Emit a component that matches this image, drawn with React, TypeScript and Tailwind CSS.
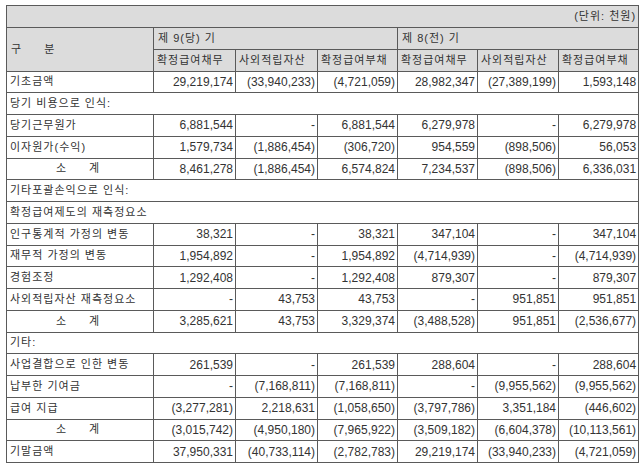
const font = { fontFamily: '"Liberation Sans", "Noto Sans CJK KR", sans-serif' };

type Row =
  | { kind: "section"; label: string }
  | { kind: "data"; label: string; values: string[] }
  | { kind: "sub"; values: string[] };

const rows: Row[] = [
  { kind: "data", label: "기초금액", values: ["29,219,174", "(33,940,233)", "(4,721,059)", "28,982,347", "(27,389,199)", "1,593,148"] },
  { kind: "section", label: "당기 비용으로 인식:" },
  { kind: "data", label: "당기근무원가", values: ["6,881,544", "-", "6,881,544", "6,279,978", "-", "6,279,978"] },
  { kind: "data", label: "이자원가(수익)", values: ["1,579,734", "(1,886,454)", "(306,720)", "954,559", "(898,506)", "56,053"] },
  { kind: "sub", values: ["8,461,278", "(1,886,454)", "6,574,824", "7,234,537", "(898,506)", "6,336,031"] },
  { kind: "section", label: "기타포괄손익으로 인식:" },
  { kind: "section", label: "확정급여제도의 재측정요소" },
  { kind: "data", label: "인구통계적 가정의 변동", values: ["38,321", "-", "38,321", "347,104", "-", "347,104"] },
  { kind: "data", label: "재무적 가정의 변동", values: ["1,954,892", "-", "1,954,892", "(4,714,939)", "-", "(4,714,939)"] },
  { kind: "data", label: "경험조정", values: ["1,292,408", "-", "1,292,408", "879,307", "-", "879,307"] },
  { kind: "data", label: "사외적립자산 재측정요소", values: ["-", "43,753", "43,753", "-", "951,851", "951,851"] },
  { kind: "sub", values: ["3,285,621", "43,753", "3,329,374", "(3,488,528)", "951,851", "(2,536,677)"] },
  { kind: "section", label: "기타:" },
  { kind: "data", label: "사업결합으로 인한 변동", values: ["261,539", "-", "261,539", "288,604", "-", "288,604"] },
  { kind: "data", label: "납부한 기여금", values: ["-", "(7,168,811)", "(7,168,811)", "-", "(9,955,562)", "(9,955,562)"] },
  { kind: "data", label: "급여 지급", values: ["(3,277,281)", "2,218,631", "(1,058,650)", "(3,797,786)", "3,351,184", "(446,602)"] },
  { kind: "sub", values: ["(3,015,742)", "(4,950,180)", "(7,965,922)", "(3,509,182)", "(6,604,378)", "(10,113,561)"] },
  { kind: "data", label: "기말금액", values: ["37,950,331", "(40,733,114)", "(2,782,783)", "29,219,174", "(33,940,233)", "(4,721,059)"] },
];

const cell = "border border-[#5a5a5a] p-0 leading-none";
const ko = "tracking-[1px] text-[11px]";

export default function App() {
  return (
    <div className="w-[644px] h-[469px] bg-white pt-[5px] pl-[6px]" style={font}>
      <table className="border-collapse table-fixed text-[12px] text-[#333]" style={{ width: 632 }}>
        <colgroup>
          <col className="w-[147px]" />
          <col className="w-[82px]" />
          <col className="w-[82px]" />
          <col className="w-[80px]" />
          <col className="w-[80px]" />
          <col className="w-[81px]" />
          <col className="w-[80px]" />
        </colgroup>
        <thead>
          <tr className="h-[22px] bg-[#dcdcdc]">
            <td colSpan={7} className={`${cell} ${ko} text-right pr-[2px]`}>(단위: 천원)</td>
          </tr>
          <tr className="h-[21.5px] bg-[#dcdcdc]">
            <td rowSpan={2} className={`${cell} ${ko} pl-[4px]`}>
              <span className="inline-flex gap-[22px]">
                <span>구</span>
                <span>분</span>
              </span>
            </td>
            <td colSpan={3} className={`${cell} ${ko} pl-[4px]`}>제 9(당) 기</td>
            <td colSpan={3} className={`${cell} ${ko} pl-[4px]`}>제 8(전) 기</td>
          </tr>
          <tr className="h-[22px] bg-[#dcdcdc]">
            {["확정급여채무", "사외적립자산", "확정급여부채", "확정급여채무", "사외적립자산", "확정급여부채"].map((h, i) => (
              <td key={i} className={`${cell} ${ko} pl-[3px] whitespace-nowrap overflow-hidden`}>{h}</td>
            ))}
          </tr>
        </thead>
        <tbody>
          {rows.map((r, i) => {
            if (r.kind === "section") {
              return (
                <tr key={i} className="h-[21.75px]">
                  <td colSpan={7} className={`${cell} ${ko} pl-[3px]`}>{r.label}</td>
                </tr>
              );
            }
            return (
              <tr key={i} className="h-[21.75px]">
                {r.kind === "sub" ? (
                  <td className={`${cell} ${ko} text-center`}>
                    <span className="inline-flex gap-[22px] pr-[4px]">
                      <span>소</span>
                      <span>계</span>
                    </span>
                  </td>
                ) : (
                  <td className={`${cell} ${ko} pl-[3px] whitespace-nowrap`}>{r.label}</td>
                )}
                {r.values.map((v, j) => (
                  <td key={j} className={`${cell} text-right pr-[2px] whitespace-nowrap`}>{v}</td>
                ))}
              </tr>
            );
          })}
        </tbody>
      </table>
    </div>
  );
}
